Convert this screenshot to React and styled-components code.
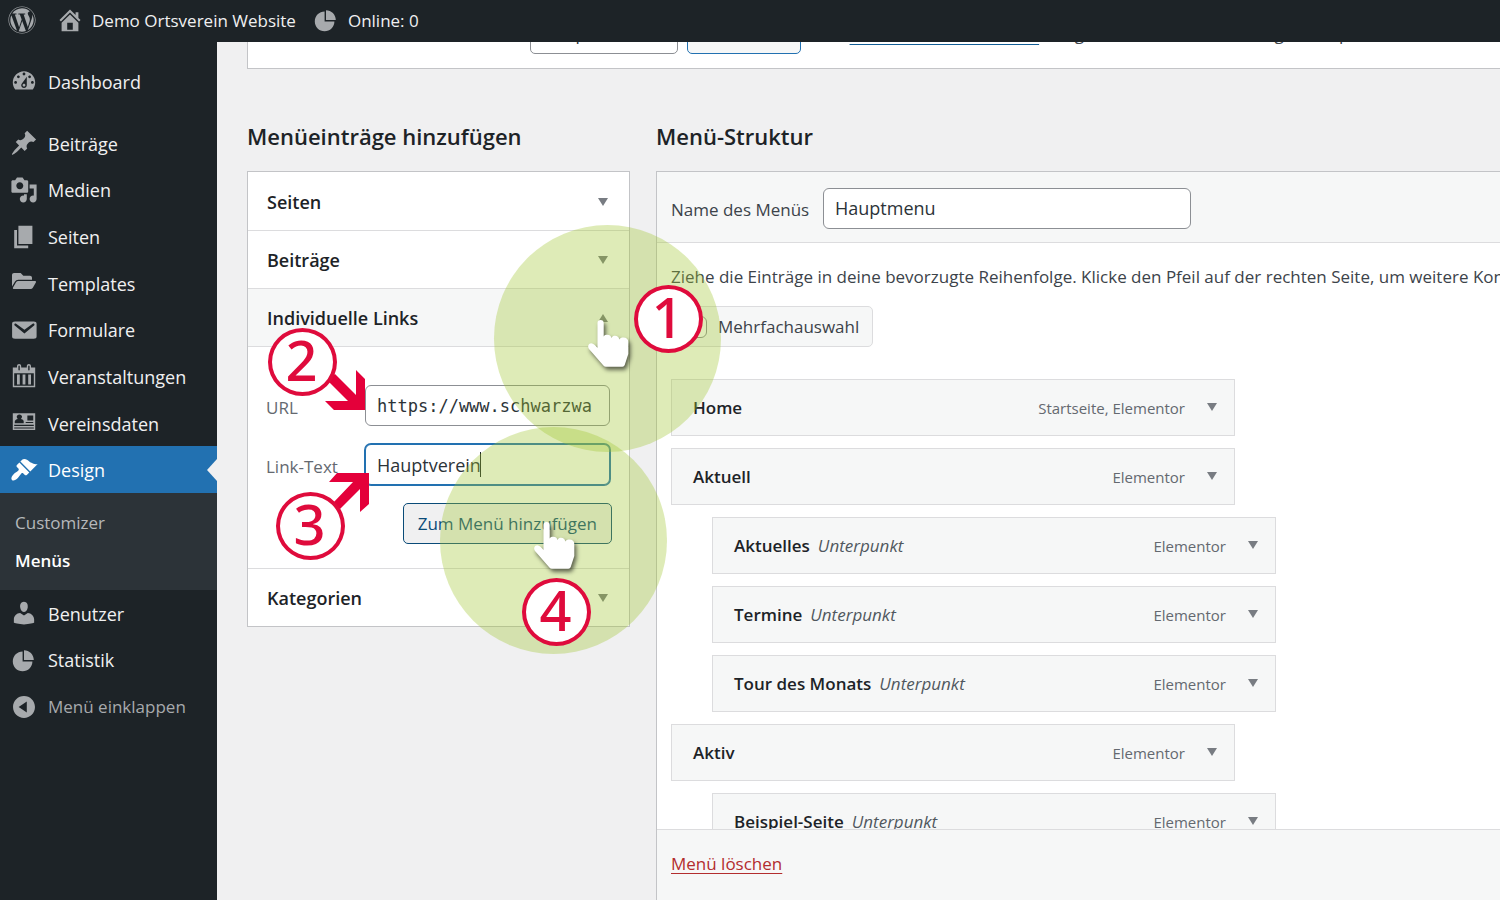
import React from "react";
import styled, { createGlobalStyle, css } from "styled-components";
import { FaWordpress, FaFolderOpen } from "react-icons/fa";

const GlobalStyle = createGlobalStyle`
  *, *::before, *::after { box-sizing: border-box; }
  body {
    margin: 0;
    background: #f0f0f1;
    color: #3c434a;
    font-family: "Open Sans", "Noto Sans", sans-serif;
    font-size: 17px;
    line-height: 24px;
  }
  button, input, select { font: inherit; color: inherit; margin: 0; }
  ul, h2, h3, p { margin: 0; padding: 0; }
  h3 { font: inherit; }
  ul { list-style: none; }
`;

const Page = styled.div`
  position: relative;
  display: flex;
  flex-direction: column;
  height: 100vh;
  overflow: hidden;
`;

/* ---------- admin bar ---------- */

const AdminBar = styled.header`
  flex: none;
  display: flex;
  align-items: center;
  gap: 16px;
  height: 42px;
  padding: 0 8px 2px;
  background: #1d2327;
  color: #a7aaad;
`;

const BarLink = styled.a`
  display: flex;
  align-items: center;
  gap: 8px;
  min-width: 32px;
  color: #a7aaad;
  text-decoration: none;
  span { padding-top: 2px; color: #f0f0f1; }
`;

/* ---------- sidebar ---------- */

const Columns = styled.div`
  flex: 1;
  display: flex;
  min-height: 0;
`;

const Sidebar = styled.nav`
  flex: none;
  width: 217px;
  padding-top: 16px;
  background: #1d2327;
`;

const NavGroup = styled.ul`
  display: grid;
  grid-auto-rows: 1fr;
  height: ${(p) => p.$height};
  margin-bottom: ${(p) => p.$gap || "0"};
`;

const NavLink = styled.a`
  position: relative;
  display: flex;
  align-items: center;
  gap: 10px;
  height: 100%;
  padding-left: 10px;
  text-decoration: none;
  color: ${(p) => (p.$muted ? "#a7aaad" : "#f0f0f1")};
  font-size: ${(p) => (p.$muted ? "17px" : "18px")};
  svg { color: #a7aaad; flex: none; }
  ${(p) =>
    p.$active &&
    css`
      background: #2271b1;
      color: #fff;
      svg { color: #fff; }
      &::after {
        content: "";
        position: absolute;
        right: 0;
        top: 50%;
        margin-top: -11px;
        border: 11px solid transparent;
        border-left: 0;
        border-right: 10px solid #f0f0f1;
      }
    `}
`;

const NavText = styled.span`
  padding-top: 1px;
`;

const IconBox = styled.span`
  display: flex;
  justify-content: center;
  width: 28px;
  flex: none;
  padding-bottom: ${(p) => (p.$raised ? "4px" : "0")};
`;

const SubMenu = styled.ul`
  padding: 11px 15px 10px;
  background: #2c3338;
`;

const SubLink = styled.a`
  display: block;
  line-height: 38px;
  text-decoration: none;
  color: ${(p) => (p.$current ? "#fff" : "#b5b8bb")};
  font-weight: ${(p) => (p.$current ? 600 : 400)};
`;

/* ---------- content ---------- */

const Main = styled.main`
  flex: 1;
  display: flex;
  flex-direction: column;
  min-width: 0;
  padding-left: 30px;
`;

const ManageBar = styled.section`
  flex: none;
  display: flex;
  align-items: flex-end;
  height: 27px;
  padding: 0 0 14px 282px;
  overflow: hidden;
  white-space: nowrap;
  background: #fff;
  border: 1px solid #c3c4c7;
  border-width: 0 0 1px 1px;
`;

const Picker = styled.select`
  appearance: none;
  flex: none;
  width: 148px;
  height: 41px;
  margin-right: 9px;
  padding: 0 12px;
  border: 1px solid #8c8f94;
  border-radius: 5px;
  background: #fff;
  color: #2c3338;
`;

const Button = styled.button`
  flex: none;
  width: ${(p) => p.$width || "auto"};
  height: 41px;
  padding: 0 14px;
  border: 1px solid ${(p) => (p.$hovered ? "#0a4b78" : "#2271b1")};
  border-radius: 5px;
  background: ${(p) => (p.$hovered ? "#f0f0f1" : "#f6f7f7")};
  color: ${(p) => (p.$hovered ? "#0a4b78" : "#2271b1")};
  white-space: nowrap;
`;

const ManageHint = styled.p`
  padding-left: 7px;
  line-height: 41px;
  a { color: #135e96; text-underline-offset: 4px; }
`;

const Frame = styled.div`
  flex: 1;
  display: flex;
  gap: 26px;
  min-height: 0;
  padding-top: 52px;
`;

const Column = styled.section`
  display: flex;
  flex-direction: column;
  flex: ${(p) => (p.$width ? "none" : "1")};
  width: ${(p) => p.$width || "auto"};
  min-width: 0;
`;

const Heading = styled.h2`
  height: 50px;
  color: #1d2327;
  font-size: 22px;
  line-height: 30px;
  font-weight: 600;
`;

const Accordion = styled.div`
  padding-top: 1px;
  background: #fff;
  border: 1px solid #c3c4c7;
`;

const AccordionItem = styled.div`
  border-bottom: 1px solid #dcdcde;
  &:last-child { border-bottom: 0; }
`;

const AccordionHead = styled.button`
  display: flex;
  align-items: center;
  justify-content: space-between;
  width: 100%;
  height: ${(p) => (p.$open ? "58px" : "57px")};
  padding: 0 21px 0 19px;
  border: 0;
  border-bottom: ${(p) => (p.$open ? "1px solid #dcdcde" : "0")};
  background: ${(p) => (p.$open ? "#f6f7f7" : "#fff")};
  color: #1d2327;
  font-size: 18px;
  font-weight: 600;
`;

const Triangle = styled.span`
  width: 0;
  height: 0;
  border: 5px solid transparent;
  ${(p) =>
    p.$up
      ? css`border-top: 0; border-bottom: 8px solid #787c82;`
      : css`border-bottom: 0; border-top: 8px solid #787c82;`}
`;

const LinkForm = styled.form`
  display: flex;
  flex-direction: column;
  gap: 18px;
  padding: 38px 19px 24px 18px;
`;

const Field = styled.div`
  position: relative;
  display: flex;
  align-items: center;
  label { flex: 1; color: #646970; padding-top: 4px; }
`;

const TextInput = styled.input`
  width: ${(p) => p.$width};
  height: 41px;
  padding: 0 11px;
  border: 1px solid #8c8f94;
  border-radius: 6px;
  background: #fff;
  color: #2c3338;
  font-size: 18px;
  outline: none;
  ${(p) =>
    p.$mono &&
    css`
      font-family: "DejaVu Sans Mono", monospace;
      font-size: 17px;
    `}
  ${(p) =>
    p.$focused &&
    css`
      border-color: #2271b1;
      box-shadow: 0 0 0 1px #2271b1;
    `}
`;

const Caret = styled.span`
  position: absolute;
  right: 129px;
  top: 8px;
  width: 1px;
  height: 25px;
  background: #1d2327;
`;

const Actions = styled.div`
  display: flex;
  justify-content: flex-end;
  margin-right: -2px;
`;

const Structure = styled.div`
  flex: 1;
  display: flex;
  flex-direction: column;
  min-height: 0;
  background: #fff;
  border: 1px solid #c3c4c7;
  border-width: 1px 0 0 1px;
`;

const StructureHead = styled.div`
  flex: none;
  display: flex;
  align-items: center;
  gap: 16px;
  height: 71px;
  padding: 2px 14px 0;
  background: #f6f7f7;
  border-bottom: 1px solid #dcdcde;
  label { width: 136px; padding-top: 3px; white-space: nowrap; }
`;

const StructureBody = styled.div`
  flex: 1;
  min-height: 0;
  padding: 22px 0 0 14px;
  overflow: hidden;
`;

const Hint = styled.p`
  overflow: hidden;
  white-space: nowrap;
`;

const BulkToggle = styled.label`
  display: inline-flex;
  align-items: center;
  gap: 11px;
  height: 41px;
  margin: 17px 0 32px;
  padding: 0 13px;
  border: 1px solid #dcdcde;
  border-radius: 5px;
  background: #f6f7f7;
  vertical-align: top;
`;

const CheckBox = styled.input`
  appearance: none;
  width: 22px;
  height: 22px;
  border: 1px solid #8c8f94;
  border-radius: 6px;
  background: #fff;
`;

const MenuList = styled.ul`
  display: flex;
  flex-direction: column;
  gap: 12px;
`;

const MenuItem = styled.li`
  flex: none;
  display: flex;
  align-items: center;
  width: 564px;
  height: 57px;
  margin-left: ${(p) => (p.$sub ? "41px" : "0")};
  padding: 0 17px 0 21px;
  border: 1px solid #dcdcde;
  background: #f6f7f7;
`;

const ItemTitle = styled.span`
  color: #1d2327;
  font-weight: 600;
`;

const ItemNote = styled.em`
  margin-left: 8px;
  color: #50575e;
`;

const ItemType = styled.span`
  margin-left: auto;
  color: #646970;
  font-size: 15px;
`;

const ItemToggle = styled.button`
  display: flex;
  margin: 0 0 2px 22px;
  padding: 0;
  border: 0;
  background: none;
`;

const StructureFoot = styled.footer`
  flex: none;
  height: 71px;
  padding: 22px 14px;
  background: #f6f7f7;
  border-top: 1px solid #dcdcde;
  a { color: #b32d2e; text-underline-offset: 3px; }
`;

/* ---------- tutorial marks, drawn over the page ---------- */

const Marks = styled.div`
  position: absolute;
  inset: 0;
  pointer-events: none;
  overflow: hidden;
`;

const Spot = styled.div`
  position: absolute;
  left: ${(p) => p.$x}px;
  top: ${(p) => p.$y}px;
  width: 227px;
  height: 227px;
  border-radius: 50%;
  background: rgba(160, 198, 50, 0.35);
`;

const Step = styled.div`
  position: absolute;
  left: ${(p) => p.$x}px;
  top: ${(p) => p.$y}px;
  display: flex;
  align-items: center;
  justify-content: center;
  width: 69px;
  height: 68px;
  padding: 0 2px 6px 0;
  border: 4px solid #df0b3c;
  border-radius: 50%;
  background: #fff;
  color: #df0b3c;
  font-family: "Noto Sans", "Open Sans", sans-serif;
  font-size: 56px;
  line-height: 60px;
  font-weight: 500;
`;

const ArrowArt = styled.svg`
  position: absolute;
  left: ${(p) => p.$x}px;
  top: ${(p) => p.$y}px;
  fill: #e4003a;
`;

const HandArt = styled.svg`
  position: absolute;
  left: ${(p) => p.$x}px;
  top: ${(p) => p.$y}px;
  overflow: visible;
  filter: drop-shadow(2px 3px 2px rgba(0, 0, 0, 0.6));
`;

const Hand = ({ x, y }) => (
  <HandArt $x={x} $y={y} width="41" height="47" viewBox="0 0 41 47" aria-hidden="true">
    <path
      fill="#fff"
      d="M12.5 0C14.6 0 15.7 1.3 15.7 3V16.5C16.5 15 18 14.8 19.3 14.8 21.5 14.8 23 16 23.4 18 24.2 16.3 25.6 15.8 27 15.8 29.3 15.8 30.8 17 31.3 19.4 32.2 18 33.6 17.6 35.3 17.6 38.5 17.6 40.3 19.4 40.3 22V34L36.7 45Q36.2 46.7 34.4 46.7H18Q16.4 46.7 15.4 45.5L1 29C-.6 26.6 .2 23.8 2.6 23.4 5.2 23 7.4 26 9.5 28V3C9.5 1.3 10.6 0 12.5 0Z"
    />
  </HandArt>
);

const ICONS = {
  home: "M16 8.5l1.53 1.53-1.06 1.06L10 4.6l-6.47 6.49-1.06-1.06L10 2.5l4 4v-2h2v4zm-6-2.46l6 5.99V18H4v-5.97zM12 17v-5H8v5h4z",
  pie: "M10 10V3c3.87 0 7 3.13 7 7h-7zM9 4v7h7c0 3.87-3.13 7-7 7s-7-3.13-7-7 3.13-7 7-7z",
  dashboard:
    "M3.76 16h12.48c1.1-1.37 1.76-3.11 1.76-5 0-4.42-3.58-8-8-8s-8 3.58-8 8c0 1.89.66 3.63 1.76 5zM10 4c.55 0 1 .45 1 1s-.45 1-1 1-1-.45-1-1 .45-1 1-1zM6 6c.55 0 1 .45 1 1s-.45 1-1 1-1-.45-1-1 .45-1 1-1zm8 0c.55 0 1 .45 1 1s-.45 1-1 1-1-.45-1-1 .45-1 1-1zm-5.37 5.55L12 7v6c0 1.1-.9 2-2 2s-2-.9-2-2c0-.57.24-1.08.63-1.45zM4 10c.55 0 1 .45 1 1s-.45 1-1 1-1-.45-1-1 .45-1 1-1zm12 0c.55 0 1 .45 1 1s-.45 1-1 1-1-.45-1-1 .45-1 1-1zm-5 3c0-.55-.45-1-1-1s-1 .45-1 1 .45 1 1 1 1-.45 1-1z",
  pin: "M10.44 3.02l1.82-1.82 6.36 6.35-1.83 1.82c-1.05-.68-2.48-.57-3.41.36l-.75.75c-.92.93-1.04 2.35-.35 3.41l-1.83 1.82-2.41-2.41-2.8 2.79c-.42.42-3.38 2.71-3.8 2.29s1.86-3.39 2.28-3.81l2.79-2.79L4.1 9.36l1.83-1.82c1.05.69 2.48.57 3.4-.36l.75-.75c.93-.92 1.05-2.35.36-3.41z",
  media:
    "M13 11V4c0-.55-.45-1-1-1h-1.67L9 1H5L3.67 3H2c-.55 0-1 .45-1 1v7c0 .55.45 1 1 1h10c.55 0 1-.45 1-1zM7 4.5c1.38 0 2.5 1.12 2.5 2.5S8.38 9.5 7 9.5 4.5 8.38 4.5 7 5.62 4.5 7 4.5zM14 6h5v10.5c0 1.38-1.12 2.5-2.5 2.5S14 17.88 14 16.5s1.12-2.5 2.5-2.5c.17 0 .34.02.5.05V9h-3V6zm-4 8.05V13h2v3.5c0 1.38-1.12 2.5-2.5 2.5S7 17.88 7 16.5 8.12 14 9.5 14c.17 0 .34.02.5.05z",
  page: "M6 15V2h10v13H6zm-1 1h8v2H3V5h2v11z",
  mail: "M3.6 3.9h13.3C18.3 3.9 19 4.4 19 5.5v9.1c0 1.1-.7 1.6-2.1 1.6H3.6c-1.4 0-2.1-.5-2.1-1.6V5.5c0-1.1.7-1.6 2.1-1.6zm6.7 8.6l6.93-5.73c.24-.2.43-.66.13-1.07-.29-.41-.82-.42-1.17-.17l-5.89 4.26L4.4 5.53c-.35-.25-.88-.24-1.17.17-.3.41-.11.87.13 1.07z",
  calendar:
    "M15 4h3v14H2V4h3V3c0-.83.67-1.5 1.5-1.5S8 2.17 8 3v1h4V3c0-.83.67-1.5 1.5-1.5S15 2.17 15 3v1zM6 3v2.5c0 .28.22.5.5.5s.5-.22.5-.5V3c0-.28-.22-.5-.5-.5S6 2.72 6 3zm7 0v2.5c0 .28.22.5.5.5s.5-.22.5-.5V3c0-.28-.22-.5-.5-.5s-.5.22-.5.5zm4 14V8H3v9h14zM7 16V9H5v7h2zm4 0V9H9v7h2zm4 0V9h-2v7h2z",
  card: "M2 3h16v12H2zM3 12.2h14v-.9H3zM3 14h14v-.8H3zM3.4 10.2h6.4V8.9c0-1.1-1-1.6-2-1.8.5-.4.8-1 .8-1.5 0-1-.8-1.7-1.9-1.7s-1.9.7-1.9 1.7c0 .6.3 1.1.8 1.5-1.2.2-2.2.8-2.2 2zM12.4 4.6v3.6h4.2V4.6zM11.2 9.2v.8h5.4v-.8z",
  brush:
    "M14.48 11.06L7.41 3.99l1.5-1.5c.5-.56 2.3-.47 3.51.32 1.21.8 1.43 1.28 2.91 2.1 1.18.64 2.45 1.26 4.45.85zm-.71.71L6.7 4.7 4.93 6.47c-.39.39-.39 1.02 0 1.41l1.06 1.06c.39.39.39 1.03 0 1.42-.6.6-1.43 1.11-2.21 1.69-.35.26-.7.53-1.01.84C1.43 14.23.4 16.08 1.4 17.07c.99 1 2.84-.03 4.18-1.36.31-.31.58-.66.85-1.02.57-.78 1.08-1.61 1.69-2.21.39-.39 1.02-.39 1.41 0l1.06 1.06c.39.39 1.02.39 1.41 0z",
  user: "M10 9.25c-2.27 0-2.73-3.44-2.73-3.44C7 4.02 7.82 2 9.97 2c2.16 0 2.98 2.02 2.71 3.81 0 0-.41 3.44-2.68 3.44zm0 2.57L12.72 10c2.39 0 4.52 2.33 4.52 4.53v2.49s-3.65 1.13-7.24 1.13c-3.65 0-7.24-1.13-7.24-1.13v-2.49c0-2.25 1.94-4.48 4.47-4.48z",
  collapse:
    "M10 2.16c4.33 0 7.84 3.51 7.84 7.84s-3.51 7.84-7.84 7.84S2.16 14.33 2.16 10 5.71 2.16 10 2.16zm2 11.72V6.12L6.18 9.97z",
};

const Icon = ({ name }) => (
  <svg width="28" height="28" viewBox="0 0 20 20" fill="currentColor" fillRule="evenodd" aria-hidden="true">
    <path d={ICONS[name]} />
  </svg>
);

const NavItem = ({ icon, label, active, muted }) => (
  <li>
    <NavLink href="#" $active={active} $muted={muted}>
      <IconBox $raised={icon === "folder"}>
        {icon === "folder" ? <FaFolderOpen size={24} /> : <Icon name={icon} />}
      </IconBox>
      <NavText>{label}</NavText>
    </NavLink>
  </li>
);

const CONTENT_NAV = [
  ["pin", "Beiträge"],
  ["media", "Medien"],
  ["page", "Seiten"],
  ["folder", "Templates"],
  ["mail", "Formulare"],
  ["calendar", "Veranstaltungen"],
  ["card", "Vereinsdaten"],
  ["brush", "Design"],
];

const MENU_ITEMS = [
  { title: "Home", type: "Startseite, Elementor" },
  { title: "Aktuell", type: "Elementor" },
  { title: "Aktuelles", type: "Elementor", sub: true },
  { title: "Termine", type: "Elementor", sub: true },
  { title: "Tour des Monats", type: "Elementor", sub: true },
  { title: "Aktiv", type: "Elementor" },
  { title: "Beispiel-Seite", type: "Elementor", sub: true },
];

const Section = ({ title, open, children }) => (
  <AccordionItem>
    <h3>
      <AccordionHead type="button" $open={open} aria-expanded={!!open}>
        {title}
        <Triangle $up={open} />
      </AccordionHead>
    </h3>
    {children}
  </AccordionItem>
);

export default function App() {
  return (
    <Page>
      <GlobalStyle />
      <AdminBar>
        <BarLink href="#" aria-label="WordPress">
          <FaWordpress size={28} />
        </BarLink>
        <BarLink href="#">
          <Icon name="home" />
          <span>Demo Ortsverein Website</span>
        </BarLink>
        <BarLink href="#">
          <Icon name="pie" />
          <span>Online: 0</span>
        </BarLink>
      </AdminBar>

      <Columns>
        <Sidebar>
          <NavGroup $height="46px" $gap="16px">
            <NavItem icon="dashboard" label="Dashboard" />
          </NavGroup>
          <NavGroup $height="373px">
            {CONTENT_NAV.map(([icon, label]) => (
              <NavItem key={label} icon={icon} label={label} active={label === "Design"} />
            ))}
          </NavGroup>
          <SubMenu>
            <li><SubLink href="#">Customizer</SubLink></li>
            <li><SubLink href="#" $current>Menüs</SubLink></li>
          </SubMenu>
          <NavGroup $height="140px">
            <NavItem icon="user" label="Benutzer" />
            <NavItem icon="pie" label="Statistik" />
            <NavItem icon="collapse" label="Menü einklappen" muted />
          </NavGroup>
        </Sidebar>

        <Main>
          <ManageBar>
            <Picker aria-label="Menü" defaultValue="h">
              <option value="h">Hauptmenu</option>
            </Picker>
            <Button type="button" $width="114px" aria-label="Auswählen" />
            <ManageHint>
              oder <a href="#">erstelle ein neues Menü</a>. Vergiss nicht, deine Änderungen zu speichern!
            </ManageHint>
          </ManageBar>

          <Frame>
            <Column $width="383px">
              <Heading>Menüeinträge hinzufügen</Heading>
              <Accordion>
                <Section title="Seiten" />
                <Section title="Beiträge" />
                <Section title="Individuelle Links" open>
                  <LinkForm>
                    <Field>
                      <label htmlFor="link-url">URL</label>
                      <TextInput id="link-url" $width="245px" $mono defaultValue="https://www.schwarzwa" />
                    </Field>
                    <Field>
                      <label htmlFor="link-text">Link-Text</label>
                      <TextInput id="link-text" $width="245px" $focused defaultValue="Hauptverein" />
                      <Caret />
                    </Field>
                    <Actions>
                      <Button type="button" $hovered>Zum Menü hinzufügen</Button>
                    </Actions>
                  </LinkForm>
                </Section>
                <Section title="Kategorien" />
              </Accordion>
            </Column>

            <Column>
              <Heading>Menü-Struktur</Heading>
              <Structure>
                <StructureHead>
                  <label htmlFor="menu-name">Name des Menüs</label>
                  <TextInput id="menu-name" $width="368px" defaultValue="Hauptmenu" />
                </StructureHead>
                <StructureBody>
                  <Hint>
                    Ziehe die Einträge in deine bevorzugte Reihenfolge. Klicke den Pfeil auf der rechten Seite, um
                    weitere Konfigurationsmöglichkeiten zu erhalten.
                  </Hint>
                  <BulkToggle>
                    <CheckBox type="checkbox" />
                    Mehrfachauswahl
                  </BulkToggle>
                  <MenuList>
                    {MENU_ITEMS.map((item) => (
                      <MenuItem key={item.title} $sub={item.sub}>
                        <ItemTitle>{item.title}</ItemTitle>
                        {item.sub && <ItemNote>Unterpunkt</ItemNote>}
                        <ItemType>{item.type}</ItemType>
                        <ItemToggle type="button" aria-label={`${item.title} bearbeiten`}>
                          <Triangle />
                        </ItemToggle>
                      </MenuItem>
                    ))}
                  </MenuList>
                </StructureBody>
                <StructureFoot>
                  <a href="#">Menü löschen</a>
                </StructureFoot>
              </Structure>
            </Column>
          </Frame>
        </Main>
      </Columns>

      <Marks>
        <Spot $x={494} $y={225} />
        <Spot $x={440} $y={427} />
        <ArrowArt $x={325} $y={370} width="40" height="40" viewBox="0 0 40 40" aria-hidden="true">
          <path d="M10 4L31 25V0L40 9V40H9L0 31H23L2 10Z" />
        </ArrowArt>
        <ArrowArt $x={329} $y={473} width="40" height="40" viewBox="0 0 40 40" aria-hidden="true">
          <path d="M8 0H40V31L31 39V16L11 36L4 30L24 9H0Z" />
        </ArrowArt>
        <Step $x={634} $y={285}>1</Step>
        <Step $x={268} $y={328}>2</Step>
        <Step $x={276} $y={492}>3</Step>
        <Step $x={522} $y={578}>4</Step>
        <Hand x={588} y={320} />
        <Hand x={534} y={522} />
      </Marks>
    </Page>
  );
}
